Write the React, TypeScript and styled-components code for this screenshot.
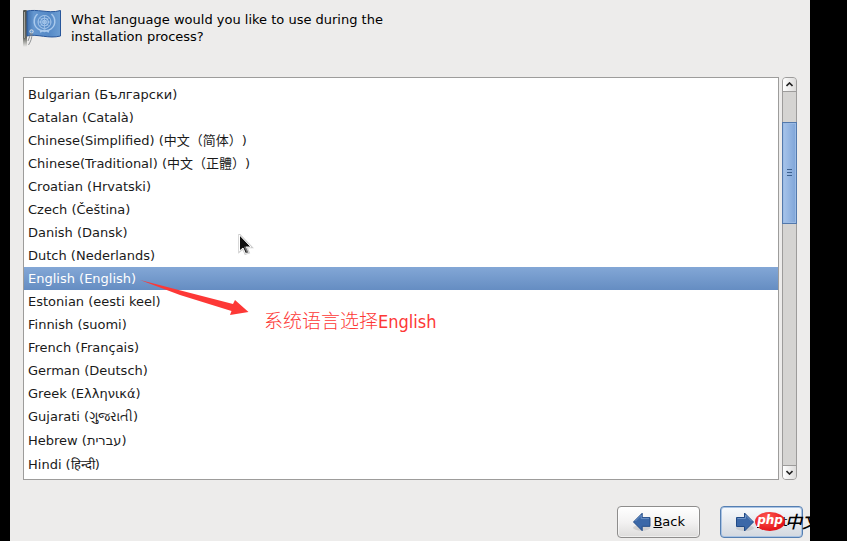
import React, { useState } from "react";
import styled, { createGlobalStyle } from "styled-components";

const Global = createGlobalStyle`
  * { box-sizing: border-box; }
  html, body, #root { height: 100%; margin: 0; }
  body {
    background: #000;
    overflow: hidden;
    color: #1a1a1a;
    font-family: "DejaVu Sans", "Noto Sans CJK SC", sans-serif;
    font-size: 13px;
    text-spacing-trim: space-all;
  }
`;

const Installer = styled.main`
  position: relative;
  display: flex;
  flex-direction: column;
  height: 100%;
  margin: 0 37px 0 10px;
  padding: 8px 13px 3px;
  background: #edeceb;
`;

const Header = styled.header`
  display: flex;
  gap: 10px;
  height: 69px;
`;

const Question = styled.h1`
  max-width: 320px;
  margin: 3px 0 0;
  color: #000;
  font-size: 13px;
  font-weight: 400;
  line-height: 17px;
`;

const ListArea = styled.section`
  display: flex;
  flex: 1;
  gap: 3px;
  min-height: 0;
`;

const LanguageList = styled.ul`
  flex: 1;
  margin: 0;
  padding: 5px 0 0;
  overflow: hidden;
  border: 1px solid #9d9c9b;
  background: #fff;
  list-style: none;
`;

const LanguageRow = styled.button<{ $selected: boolean; $tall: boolean }>`
  display: block;
  width: 100%;
  height: ${(p) => (p.$tall ? 24 : 23)}px;
  padding: 0 4px;
  border: 0;
  background: ${(p) => (p.$selected ? "linear-gradient(#83a7d6, #658dc2)" : "transparent")};
  color: ${(p) => (p.$selected ? "#fff" : "#1a1a1a")};
  font: inherit;
  line-height: ${(p) => (p.$tall ? 24 : 23)}px;
  text-align: left;
  white-space: nowrap;
`;

const ScrollBar = styled.div`
  display: flex;
  flex-direction: column;
  width: 15px;
  border: 1px solid #9d9c9b;
  border-radius: 4px;
  background: #d5d4d2;
`;

const Stepper = styled.button<{ $end?: boolean }>`
  display: grid;
  place-items: center;
  height: 14px;
  padding: 0;
  border: 0 solid #9d9c9b;
  border-width: ${(p) => (p.$end ? "1px 0 0" : "0 0 1px")};
  border-radius: ${(p) => (p.$end ? "0 0 3px 3px" : "3px 3px 0 0")};
  background: linear-gradient(90deg, #fff, #dddcdb);
`;

const Track = styled.div`
  display: flex;
  flex: 1;
  flex-direction: column;
`;

const Before = styled.div`
  flex: 30;
`;

const Thumb = styled.div`
  display: flex;
  flex: 100;
  flex-direction: column;
  align-items: center;
  justify-content: center;
  gap: 2px;
  margin: 0 -1px;
  border: 1px solid #5379ac;
  background: linear-gradient(90deg, #a7c4ea, #7fa5d8);
  box-shadow: inset 0 0 0 1px #9bbbe4;
`;

const Grip = styled.span`
  width: 5px;
  height: 1px;
  background: #3d618f;
`;

const After = styled.div`
  flex: 242;
`;

const Footer = styled.footer`
  display: flex;
  justify-content: flex-end;
  gap: 20px;
  margin: 26px -6px 0 0;
`;

const NavButton = styled.button<{ $primary?: boolean }>`
  display: flex;
  align-items: center;
  gap: 2px;
  width: 83px;
  height: 32px;
  padding: 0 14px 2px;
  border: 1px solid ${(p) => (p.$primary ? "#557fb2" : "#8e8d8c")};
  border-radius: 4px;
  background: ${(p) =>
    p.$primary ? "linear-gradient(#f7fafd, #d3d8df)" : "linear-gradient(#fff, #f3f2f2 50%, #dddcdb)"};
  box-shadow: ${(p) => (p.$primary ? "inset 0 0 0 1px #a9c3e3" : "inset 0 0 0 1px #fff8")};
  color: #000;
  font: inherit;
  white-space: nowrap;
`;

const Note = styled.p`
  position: absolute;
  top: 307px;
  left: 254px;
  margin: 0;
  color: #fd3836;
  font-family: "Noto Sans CJK SC", sans-serif;
  font-size: 19px;
  font-weight: 300;
  line-height: 25px;
  white-space: nowrap;
`;

const Latin = styled.span`
  font-family: "DejaVu Sans Condensed", "DejaVu Sans", sans-serif;
  font-size: 18px;
  font-weight: 400;
`;

const Arrow = styled.svg`
  position: absolute;
  top: 276px;
  left: 128px;
`;

const Pointer = styled.svg`
  position: absolute;
  top: 234px;
  left: 228px;
`;

const Watermark = styled.div`
  position: absolute;
  right: 0;
  bottom: 8px;
  display: flex;
  align-items: center;
  width: 55px;
  height: 24px;
  overflow: hidden;
  color: #000;
  font: italic 500 17px/22px "Noto Sans CJK SC", sans-serif;
  white-space: nowrap;
`;

const Badge = styled.span`
  flex: none;
  width: 30px;
  height: 19px;
  border-radius: 50%;
  background: radial-gradient(at 40% 30%, #ff5a50, #e5141c 70%);
  color: #fff;
  font: italic 700 12px/17px "DejaVu Sans", sans-serif;
  text-align: center;
`;

const languages = [
  { name: "Bulgarian (Български)" },
  { name: "Catalan (Català)" },
  { name: "Chinese(Simplified) (中文（简体）)" },
  { name: "Chinese(Traditional) (中文（正體）)" },
  { name: "Croatian (Hrvatski)" },
  { name: "Czech (Čeština)" },
  { name: "Danish (Dansk)" },
  { name: "Dutch (Nederlands)" },
  { name: "English (English)" },
  { name: "Estonian (eesti keel)" },
  { name: "Finnish (suomi)" },
  { name: "French (Français)" },
  { name: "German (Deutsch)" },
  { name: "Greek (Ελληνικά)" },
  { name: "Gujarati (ગુજરાતી)", tall: true },
  { name: "Hebrew (עברית)", tall: true },
  { name: "Hindi (हिन्दी)", tall: true },
];

const FlagIcon = () => (
  <svg width="38" height="40" viewBox="0 0 38 40" aria-hidden="true">
    <defs>
      <linearGradient id="pole" x1="0" y1="0" x2="0" y2="1">
        <stop offset="0" stopColor="#555750" />
        <stop offset=".75" stopColor="#656760" />
        <stop offset="1" stopColor="#70726c" stopOpacity="0" />
      </linearGradient>
      <linearGradient id="cloth">
        <stop offset="0" stopColor="#3f71ae" />
        <stop offset=".2" stopColor="#6496cf" />
        <stop offset=".65" stopColor="#5589c6" />
        <stop offset="1" stopColor="#6d9ed3" />
      </linearGradient>
    </defs>
    <rect y="2" width="4" height="37" rx="1" fill="url(#pole)" />
    <path d="M1.500 4v26" stroke="#a4a5a0" />
    <path d="M4 3c5-1 10-.5 15 0s12 1.500 18.500-.5v25.500c-6 1.500-11 1-17 .3S9 26.500 4 28z" fill="url(#cloth)" stroke="#28569a" />
    <g fill="none" stroke="#a9c9ec">
      <circle cx="21.500" cy="14" r="6.500" />
      <circle cx="21.500" cy="14" r="4" />
      <circle cx="21.500" cy="14" r="1.800" />
      <path d="M15 14h13M21.500 7.500v13M17 9.500l9 9M26 9.500l-9 9" strokeWidth=".7" />
      <path
        d="M14.500 6c-5 5-4.500 13 2.500 16l4.500 1.500 4.500-1.500c7-3 7.500-11 2.500-16M17 24l4.500-2 4.500 2"
        strokeWidth="1.500"
      />
    </g>
    <circle cx="8.500" cy="23.500" r="1.700" fill="#6a9bd1" stroke="#e0e4e8" />
    <path d="M9 25c0 5-1 8-3.500 12M8 25c-1 3-2 5-3 8" fill="none" stroke="#85888a" strokeWidth=".9" />
  </svg>
);

const Direction = ({ forward = false }: { forward?: boolean }) => (
  <svg width="20" height="22" viewBox="0 0 20 22" aria-hidden="true">
    <ellipse cx="10" cy="18" rx="9" ry="3" fill="#000" opacity=".1" />
    <path
      d={forward ? "M1.500 7.500h8v-4.500l9 9-9 9v-4.500h-8z" : "M18.500 7.500h-8v-4.500l-9 9 9 9v-4.500h8z"}
      fill="#3b68a8"
      stroke="#204a87"
      strokeLinejoin="round"
    />
    <path d={forward ? "M2.500 8.500h8v-3.500l6 6" : "M17.500 8.500h-8v-3.500l-6 6"} fill="none" stroke="#6d93c7" />
  </svg>
);

const Chevron = ({ down = false }: { down?: boolean }) => (
  <svg width="7" height="5" viewBox="0 0 7 5" aria-hidden="true">
    <path d={down ? "M.5 1l3 3 3-3" : "M.5 4l3-3 3 3"} fill="none" stroke="#222" strokeWidth="1.600" />
  </svg>
);

export default function App() {
  const [selected, setSelected] = useState("English (English)");
  return (
    <>
      <Global />
      <Installer>
        <Header>
          <FlagIcon />
          <Question>What language would you like to use during the installation process?</Question>
        </Header>
        <ListArea>
          <LanguageList>
            {languages.map(({ name, tall = false }) => (
              <li key={name}>
                <LanguageRow
                  $selected={name === selected}
                  $tall={tall}
                  aria-pressed={name === selected}
                  onClick={() => setSelected(name)}
                >
                  {name}
                </LanguageRow>
              </li>
            ))}
          </LanguageList>
          <ScrollBar>
            <Stepper aria-label="Scroll up"><Chevron /></Stepper>
            <Track>
              <Before />
              <Thumb><Grip /><Grip /><Grip /></Thumb>
              <After />
            </Track>
            <Stepper $end aria-label="Scroll down"><Chevron down /></Stepper>
          </ScrollBar>
        </ListArea>
        <Footer>
          <NavButton><Direction /><span><u>B</u>ack</span></NavButton>
          <NavButton $primary><Direction forward /><span><u>N</u>ext</span></NavButton>
        </Footer>
        <Pointer width="16" height="21" viewBox="0 0 16 21" aria-hidden="true">
          <path d="M1.500 1v16l3.500-3 2.500 5.500 3-1-2.500-5.500h5z" fill="none" stroke="#0003" strokeWidth="2.500" />
          <path d="M1.500 1v16l3.500-3 2.500 5.500 3-1-2.500-5.500h5z" fill="#111" stroke="#fff" />
          <path d="M6 13l3 6 1.500-.7-3-6z" fill="#777" />
        </Pointer>
        <Arrow width="112" height="42" viewBox="0 0 112 42" aria-hidden="true">
          <path d="M2 4l93 24 2-4 13.500 12L92 39l1.500-4L42 19z" fill="#fd3836" />
        </Arrow>
        <Note>系统语言选择<Latin>English</Latin></Note>
        <Watermark><Badge>php</Badge>中文</Watermark>
      </Installer>
    </>
  );
}
